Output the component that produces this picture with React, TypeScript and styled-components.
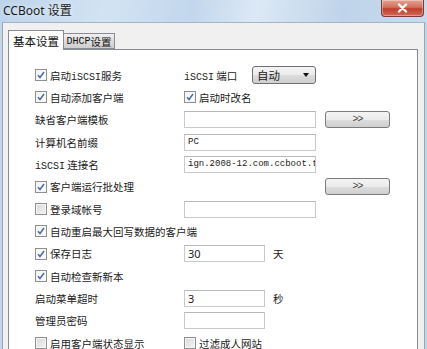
import React from 'react';
import styled, { createGlobalStyle } from 'styled-components';

const GlobalStyle = createGlobalStyle`
  html, body {
    margin: 0;
    padding: 0;
    background: #f0f0f0;
    overflow: hidden;
  }
`;

const cjk = `"Noto Sans CJK SC", "Noto Sans", sans-serif`;
const mono = `"Liberation Mono", "DejaVu Sans Mono", monospace`;

const Window = styled.div`
  width: 427px;
  height: 349px;
  display: flex;
  flex-direction: column;
  overflow: hidden;
  background: #c3d6ea;
  font-family: ${cjk};
  font-size: 10.5px;
  color: #1a1a1a;
`;

const TitleBar = styled.div`
  height: 22px;
  flex: none;
  display: flex;
  align-items: center;
  justify-content: space-between;
  padding-left: 3px;
  background: linear-gradient(
    100deg,
    #bcd3eb 0%,
    #d3e3f3 25%,
    #c2d7ed 45%,
    #dce8f5 60%,
    #bfd4ea 80%,
    #c9dbee 100%
  );
`;

const Title = styled.span`
  font-family: "Noto Sans", ${cjk};
  font-size: 12px;
  color: #1b1b1b;
  text-shadow: 0 0 6px rgba(255, 255, 255, 0.9);
  margin-top: -2px;
`;

const CloseButton = styled.div`
  align-self: flex-start;
  width: 41px;
  height: 16px;
  margin-right: 3px;
  border: 1px solid #7a3b3b;
  border-top: none;
  border-radius: 0 0 4px 4px;
  background: linear-gradient(#e5a393 0%, #d2715d 45%, #bf3f2a 55%, #d0695a 100%);
  display: flex;
  align-items: center;
  justify-content: center;
  box-shadow: inset 0 0 0 1px rgba(255, 255, 255, 0.35);
`;

const Body = styled.div`
  flex: 1;
  margin: 0 2px 0 2px;
  border-left: 1px solid #9aa6b4;
  border-right: 1px solid #9aa6b4;
  border-top: 1px solid #a6b3c2;
  background: #f0f0f0;
  padding: 7px 6px 0 5px;
  display: flex;
  flex-direction: column;
`;

const TabStrip = styled.div`
  display: flex;
  align-items: flex-end;
  height: 19px;
  flex: none;
  position: relative;
  z-index: 1;
`;

const Tab = styled.div<{ $active?: boolean }>`
  box-sizing: border-box;
  display: flex;
  align-items: center;
  justify-content: center;
  border: 1px solid #898c95;
  border-bottom: ${(p) => (p.$active ? 'none' : '1px solid #898c95')};
  height: ${(p) => (p.$active ? '20px' : '16px')};
  margin-bottom: ${(p) => (p.$active ? '-1px' : '0')};
  width: ${(p) => (p.$active ? '56px' : '52px')};
  margin-left: ${(p) => (p.$active ? '0' : '-1px')};
  background: ${(p) =>
    p.$active ? '#ffffff' : 'linear-gradient(#f0f0f0, #dcdcdc 50%, #cfcfcf)'};
  font-size: ${(p) => (p.$active ? '11.5px' : '10.5px')};
  padding-top: ${(p) => (p.$active ? '1px' : '0')};
  color: #111;
`;

const Panel = styled.div`
  flex: 1;
  border: 1px solid #898c95;
  border-bottom: none;
  background: #fff;
  padding: 14px 0 0 26px;
`;

const Row = styled.div`
  display: grid;
  grid-template-columns: 149px 132px 9px 65px;
  align-items: center;
  height: 22.33px;
`;

const Wide = styled.div`
  grid-column: 1 / span 4;
`;

const Label = styled.span`
  white-space: nowrap;
`;

const Latin = styled.span`
  font-family: ${mono};
  font-size: 10px;
`;

const CheckLabel = styled.label`
  display: flex;
  align-items: center;
  gap: 3px;
  white-space: nowrap;
`;

const Box = styled.span<{ $checked?: boolean }>`
  box-sizing: border-box;
  width: 12px;
  height: 12px;
  flex: none;
  border: 1px solid #8f8f8f;
  background: ${(p) =>
    p.$checked
      ? 'linear-gradient(135deg, #f3f3f3, #fdfdfd)'
      : 'linear-gradient(135deg, #d9d9d9, #f4f4f4)'};
  box-shadow: inset 0 0 0 1px #f6f6f6;
  display: flex;
  align-items: center;
  justify-content: center;
`;

const Input = styled.div<{ $w?: number }>`
  box-sizing: border-box;
  width: ${(p) => p.$w ?? 132}px;
  height: 17px;
  border: 1px solid #c7c9cc;
  border-top-color: #b5b8bd;
  background: #fff;
  display: flex;
  align-items: center;
  padding-left: 3px;
  overflow: hidden;
  white-space: nowrap;
`;

const InputMono = styled.span`
  font-family: ${mono};
  font-size: 9px;
  color: #222;
`;

const InputText = styled.span`
  font-family: "Noto Sans", sans-serif;
  font-size: 11px;
  color: #222;
`;

const Unit = styled.div`
  display: flex;
  align-items: center;
  gap: 8px;
`;

const Pair = styled.div`
  display: flex;
  align-items: center;
  justify-content: space-between;
  grid-column: 2 / span 1;
`;

const Select = styled.div`
  box-sizing: border-box;
  width: 64px;
  height: 18px;
  border: 1px solid #707070;
  border-radius: 3px;
  background: linear-gradient(#f4f4f4, #ebebeb 50%, #dddddd 51%, #cfcfcf);
  display: flex;
  align-items: center;
  justify-content: space-between;
  padding: 0 6px 0 4px;
  font-size: 11.5px;
`;

const Arrow = styled.span`
  width: 0;
  height: 0;
  border-left: 3.5px solid transparent;
  border-right: 3.5px solid transparent;
  border-top: 4px solid #111;
`;

const Button = styled.div`
  grid-column: 4;
  box-sizing: border-box;
  width: 65px;
  height: 17px;
  border: 1px solid #7c7c7c;
  border-radius: 3px;
  background: linear-gradient(#f4f4f4, #ebebeb 50%, #dddddd 51%, #cfcfcf);
  display: flex;
  align-items: center;
  justify-content: center;
  font-family: ${mono};
  font-size: 10px;
  color: #444;
  letter-spacing: -1px;
`;

const Check = ({ checked, children }: { checked?: boolean; children: React.ReactNode }) => (
  <CheckLabel>
    <Box $checked={checked}>
      {checked && (
        <svg width="8" height="8" viewBox="0 0 8 8">
          <path d="M1 4.2 L3 6.5 L7 1" fill="none" stroke="#4a69a3" strokeWidth="1.5" />
        </svg>
      )}
    </Box>
    <Label>{children}</Label>
  </CheckLabel>
);

const App: React.FC = () => (
  <>
    <GlobalStyle />
    <Window>
      <TitleBar>
        <Title>CCBoot 设置</Title>
        <CloseButton>
          <svg width="11" height="10" viewBox="0 0 11 10">
            <path d="M2 1.5 L9 8.5 M9 1.5 L2 8.5" stroke="#fff" strokeWidth="2.4" strokeLinecap="round" />
          </svg>
        </CloseButton>
      </TitleBar>
      <Body>
        <TabStrip>
          <Tab $active>基本设置</Tab>
          <Tab>
            <Latin>DHCP</Latin>设置
          </Tab>
        </TabStrip>
        <Panel>
          <Row>
            <Check checked>
              启动<Latin>iSCSI</Latin>服务
            </Check>
            <Pair>
              <Label>
                <Latin>iSCSI</Latin> 端口
              </Label>
              <Select>
                自动
                <Arrow />
              </Select>
            </Pair>
          </Row>
          <Row>
            <Check checked>自动添加客户端</Check>
            <Check checked>启动时改名</Check>
          </Row>
          <Row>
            <Label>缺省客户端模板</Label>
            <Input />
            <Button>&gt;&gt;</Button>
          </Row>
          <Row>
            <Label>计算机名前缀</Label>
            <Input>
              <InputMono>PC</InputMono>
            </Input>
          </Row>
          <Row>
            <Label>
              <Latin>iSCSI</Latin> 连接名
            </Label>
            <Input>
              <InputMono>ign.2008-12.com.ccboot.t</InputMono>
            </Input>
          </Row>
          <Row>
            <Check checked>客户端运行批处理</Check>
            <span />
            <Button>&gt;&gt;</Button>
          </Row>
          <Row>
            <Check>登录域帐号</Check>
            <Input />
          </Row>
          <Row>
            <Wide>
              <Check checked>自动重启最大回写数据的客户端</Check>
            </Wide>
          </Row>
          <Row>
            <Check checked>保存日志</Check>
            <Unit>
              <Input $w={81}>
                <InputText>30</InputText>
              </Input>
              <Label>天</Label>
            </Unit>
          </Row>
          <Row>
            <Check checked>自动检查新新本</Check>
          </Row>
          <Row>
            <Label>启动菜单超时</Label>
            <Unit>
              <Input $w={81}>
                <InputText>3</InputText>
              </Input>
              <Label>秒</Label>
            </Unit>
          </Row>
          <Row>
            <Label>管理员密码</Label>
            <Input $w={81} />
          </Row>
          <Row>
            <Check>启用客户端状态显示</Check>
            <Check>过滤成人网站</Check>
          </Row>
        </Panel>
      </Body>
    </Window>
  </>
);

export default App;
